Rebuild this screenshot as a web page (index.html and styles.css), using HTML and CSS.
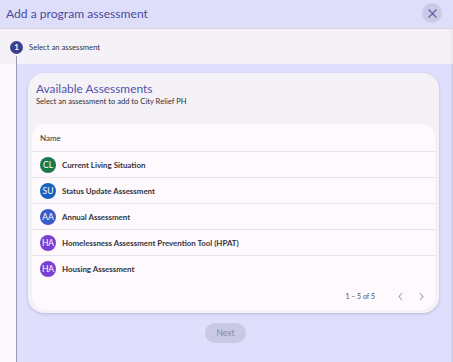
FILE: index.html
```html
<!DOCTYPE html>
<html>
<head>
<meta charset="utf-8">
<link rel="stylesheet" href="styles.css">
</head>
<body>
<div class="dialog">
  <header class="header">
    <h1 class="title">Add a program assessment</h1>
    <button class="close" aria-label="Close">
      <svg width="9" height="9" viewBox="0 0 10 10"><path d="M1 1L9 9M9 1L1 9" stroke="#55559c" stroke-width="1.4" stroke-linecap="round"/></svg>
    </button>
  </header>
  <div class="step-row">
    <span class="step-num">1</span>
    <span class="step-label">Select an assessment</span>
  </div>
  <div class="step-body">
    <div class="rail"></div>
    <div class="content">
      <section class="card">
        <h2 class="card-title">Available Assessments</h2>
        <p class="card-sub">Select an assessment to add to City Relief PH</p>
        <div class="table">
          <div class="thead">Name</div>
          <div class="row"><span class="avatar green">CL</span><span class="name">Current Living Situation</span></div>
          <div class="row"><span class="avatar blue">SU</span><span class="name">Status Update Assessment</span></div>
          <div class="row"><span class="avatar indigo">AA</span><span class="name">Annual Assessment</span></div>
          <div class="row"><span class="avatar purple">HA</span><span class="name">Homelessness Assessment Prevention Tool (HPAT)</span></div>
          <div class="row last"><span class="avatar purple">HA</span><span class="name">Housing Assessment</span></div>
          <div class="paginator">
            <span class="range">1 – 5 of 5</span>
            <span class="chev">
              <svg width="7" height="9" viewBox="0 0 7 9"><path d="M5 1L2 4.5L5 8" fill="none" stroke="#a4a2ac" stroke-width="1.1"/></svg>
            </span>
            <span class="chev">
              <svg width="7" height="9" viewBox="0 0 7 9"><path d="M2 1L5 4.5L2 8" fill="none" stroke="#a4a2ac" stroke-width="1.1"/></svg>
            </span>
          </div>
        </div>
      </section>
      <div class="actions">
        <button class="next">Next</button>
      </div>
    </div>
  </div>
</div>
</body>
</html>
```
FILE: styles.css
```css
* { box-sizing: border-box; }
html, body {
  margin: 0;
  padding: 0;
  width: 453px;
  height: 362px;
  overflow: hidden;
  font-family: Lato, "Noto Sans", sans-serif;
  color: #2f2e36;
}
.dialog {
  display: flex;
  flex-direction: column;
  height: 362px;
  background: #fcf8fd;
}
.header {
  height: 29px;
  flex: none;
  display: flex;
  align-items: center;
  justify-content: space-between;
  padding: 0 11px 2px 6px;
  background: #dedefa;
  border-bottom: 1px solid #d6d3e2;
}
.title {
  margin: 0;
  font-size: 12.1px;
  font-weight: 400;
  color: #4b4a9c;
  line-height: 15px;
}
.close {
  width: 20px;
  height: 20px;
  border: none;
  border-radius: 50%;
  background: #cacae6;
  display: flex;
  align-items: center;
  justify-content: center;
  padding: 0;
}
.step-row {
  height: 35px;
  flex: none;
  display: flex;
  align-items: center;
  gap: 6px;
  padding-left: 10px;
  padding-top: 1px;
  background: #f5f2f7;
  border-right: 2px solid #ebe8f0;
}
.step-num {
  position: relative;
  width: 13px;
  height: 13px;
  border-radius: 50%;
  background: #3e3e8f;
  color: #fff;
  font-size: 8px;
  font-weight: 700;
  display: flex;
  align-items: center;
  justify-content: center;
}
.step-num::after {
  content: "";
  position: absolute;
  left: 6px;
  top: 15px;
  width: 1px;
  height: 10px;
  background: #9c9aae;
}
.step-label {
  font-size: 7.7px;
  color: #33323a;
}
.step-body {
  flex: 1;
  display: flex;
}
.rail {
  width: 17px;
  flex: none;
  border-right: 1px solid #9c9aae;
  background: #fcf8fd;
}
.content {
  flex: 1;
  background: #dfdefc;
  border-right: 2px solid #cfcfe9;
  padding: 9px 12px 0 11px;
}
.card {
  background: #f5f2f7;
  border-radius: 16px;
  padding: 9px 4px 3px 4px;
  box-shadow: 0 1px 3px rgba(60, 60, 100, 0.22);
}
.card-title {
  margin: 0 0 0 4px;
  font-size: 11.9px;
  line-height: 14px;
  font-weight: 400;
  color: #5452ae;
}
.card-sub {
  margin: 0 0 0 4px;
  font-size: 7.6px;
  line-height: 10px;
  color: #2f2e36;
}
.table {
  margin-top: 18px;
  background: #fdf9fd;
  border-radius: 14px;
}
.thead {
  height: 28px;
  display: flex;
  align-items: center;
  padding-left: 8px;
  padding-top: 1px;
  font-size: 8px;
  font-weight: 400;
  color: #2f2e36;
  border-bottom: 1px solid #e4e1e8;
}
.row {
  height: 26px;
  display: flex;
  align-items: center;
  gap: 6px;
  padding-left: 8px;
  border-bottom: 1px solid #e4e1e8;
}
.row.last { border-bottom: none; }
.avatar {
  width: 16px;
  height: 16px;
  border-radius: 50%;
  color: #fff;
  font-size: 8.5px;
  display: flex;
  align-items: center;
  justify-content: center;
}
.green { background: #17784a; }
.blue { background: #1763bd; }
.indigo { background: #3a5cc8; }
.purple { background: #7a3fd2; }
.name {
  font-size: 7.9px;
  font-weight: 700;
  color: #35343c;
}
.paginator {
  height: 28px;
  display: flex;
  align-items: center;
  justify-content: flex-end;
  padding-right: 3px;
}
.range {
  font-size: 7px;
  color: #55545c;
  margin-right: 15px;
}
.chev {
  width: 21px;
  display: flex;
  justify-content: center;
}
.actions {
  display: flex;
  justify-content: center;
  padding-right: 16px;
  margin-top: 10px;
}
.next {
  width: 41px;
  height: 20px;
  border: none;
  border-radius: 10px;
  background: #c9c9e5;
  color: #8a899e;
  font-family: Lato, sans-serif;
  font-size: 8.5px;
  padding: 0;
}
```
